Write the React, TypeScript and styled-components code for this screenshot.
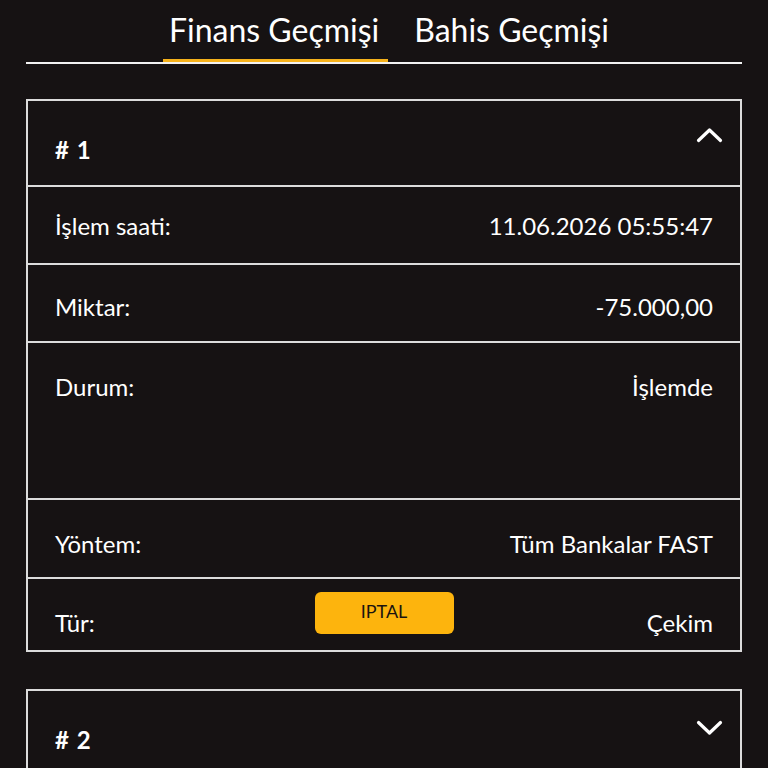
import styled, { createGlobalStyle } from 'styled-components'

const GlobalStyle = createGlobalStyle`
  body {
    margin: 0;
    background: #161213;
    color: #ffffff;
    font-family: Lato, "Open Sans", sans-serif;
  }
`

const StyledPage = styled.div`
  padding: 0 26px;
`

const StyledTabs = styled.div`
  display: flex;
  justify-content: center;
  gap: 20px;
  padding-left: 13px;
  border-bottom: 2px solid #f2f2f2;
`

const StyledTab = styled.div<{ active?: boolean }>`
  padding: 11px 9px 10px 6px;
  font-size: 32px;
  line-height: 38px;
  border-bottom: 3px solid ${({ active }) => (active ? '#f6b21b' : 'transparent')};
`

const StyledList = styled.div`
  display: flex;
  flex-direction: column;
  gap: 37px;
  padding-top: 35px;
`

const StyledCard = styled.section`
  border: 2px solid #dcdcdc;
`

const StyledHeader = styled.div`
  display: flex;
  justify-content: space-between;
  height: 84px;
  padding: 0 17px 0 27px;
  box-sizing: border-box;
`

const StyledIndex = styled.span`
  align-self: flex-end;
  padding-bottom: 20px;
  font-size: 24px;
  font-weight: 700;
  line-height: 30px;
  letter-spacing: 1px;
`

const StyledChevron = styled.svg`
  margin-top: 26px;
  width: 30px;
  height: 24px;
`

const StyledRow = styled.div<{ top: number; bottom: number }>`
  display: flex;
  justify-content: space-between;
  align-items: flex-start;
  border-top: 2px solid #dcdcdc;
  padding: ${({ top }) => top}px 27px ${({ bottom }) => bottom}px;
  font-size: 24px;
  line-height: 30px;
`

const StyledTypeRow = styled.div`
  display: grid;
  grid-template-columns: 1fr auto 1fr;
  border-top: 2px solid #dcdcdc;
  padding: 13px 27px 12px;
  font-size: 24px;
  line-height: 30px;
`

const StyledEnd = styled.span<{ right?: boolean }>`
  align-self: end;
  padding-top: 16px;
  text-align: ${({ right }) => (right ? 'right' : 'left')};
`

const StyledCancel = styled.button`
  align-self: start;
  width: 139px;
  height: 42px;
  border: none;
  border-radius: 6px;
  background: #fdb40d;
  color: #1a1410;
  font-family: Lato, "Open Sans", sans-serif;
  font-size: 18px;
  padding: 0 0 4px;
`

const Chevron = ({ up }: { up: boolean }) => (
  <StyledChevron viewBox="0 0 30 24">
    <polyline
      points={up ? '5.5,13.5 16.5,3 27.5,13.5' : '5.5,5.5 16.5,16 27.5,5.5'}
      fill="none"
      stroke="#ffffff"
      strokeWidth={3.2}
      strokeLinecap="round"
      strokeLinejoin="round"
    />
  </StyledChevron>
)

const rows = [
  { label: 'İşlem saati:', value: '11.06.2026 05:55:47', top: 24, bottom: 22 },
  { label: 'Miktar:', value: '-75.000,00', top: 27, bottom: 19 },
  { label: 'Durum:', value: 'İşlemde', top: 29, bottom: 96 },
  { label: 'Yöntem:', value: 'Tüm Bankalar FAST', top: 29, bottom: 18 },
]

const App = () => {
  return (
    <>
      <GlobalStyle />
      <StyledPage>
        <StyledTabs>
          <StyledTab active>Finans Geçmişi</StyledTab>
          <StyledTab>Bahis Geçmişi</StyledTab>
        </StyledTabs>
        <StyledList>
          <StyledCard>
            <StyledHeader>
              <StyledIndex># 1</StyledIndex>
              <Chevron up />
            </StyledHeader>
            {rows.map((row) => (
              <StyledRow key={row.label} top={row.top} bottom={row.bottom}>
                <span>{row.label}</span>
                <span>{row.value}</span>
              </StyledRow>
            ))}
            <StyledTypeRow>
              <StyledEnd>Tür:</StyledEnd>
              <StyledCancel>IPTAL</StyledCancel>
              <StyledEnd right>Çekim</StyledEnd>
            </StyledTypeRow>
          </StyledCard>
          <StyledCard>
            <StyledHeader>
              <StyledIndex># 2</StyledIndex>
              <Chevron up={false} />
            </StyledHeader>
          </StyledCard>
        </StyledList>
      </StyledPage>
    </>
  )
}

export default App
